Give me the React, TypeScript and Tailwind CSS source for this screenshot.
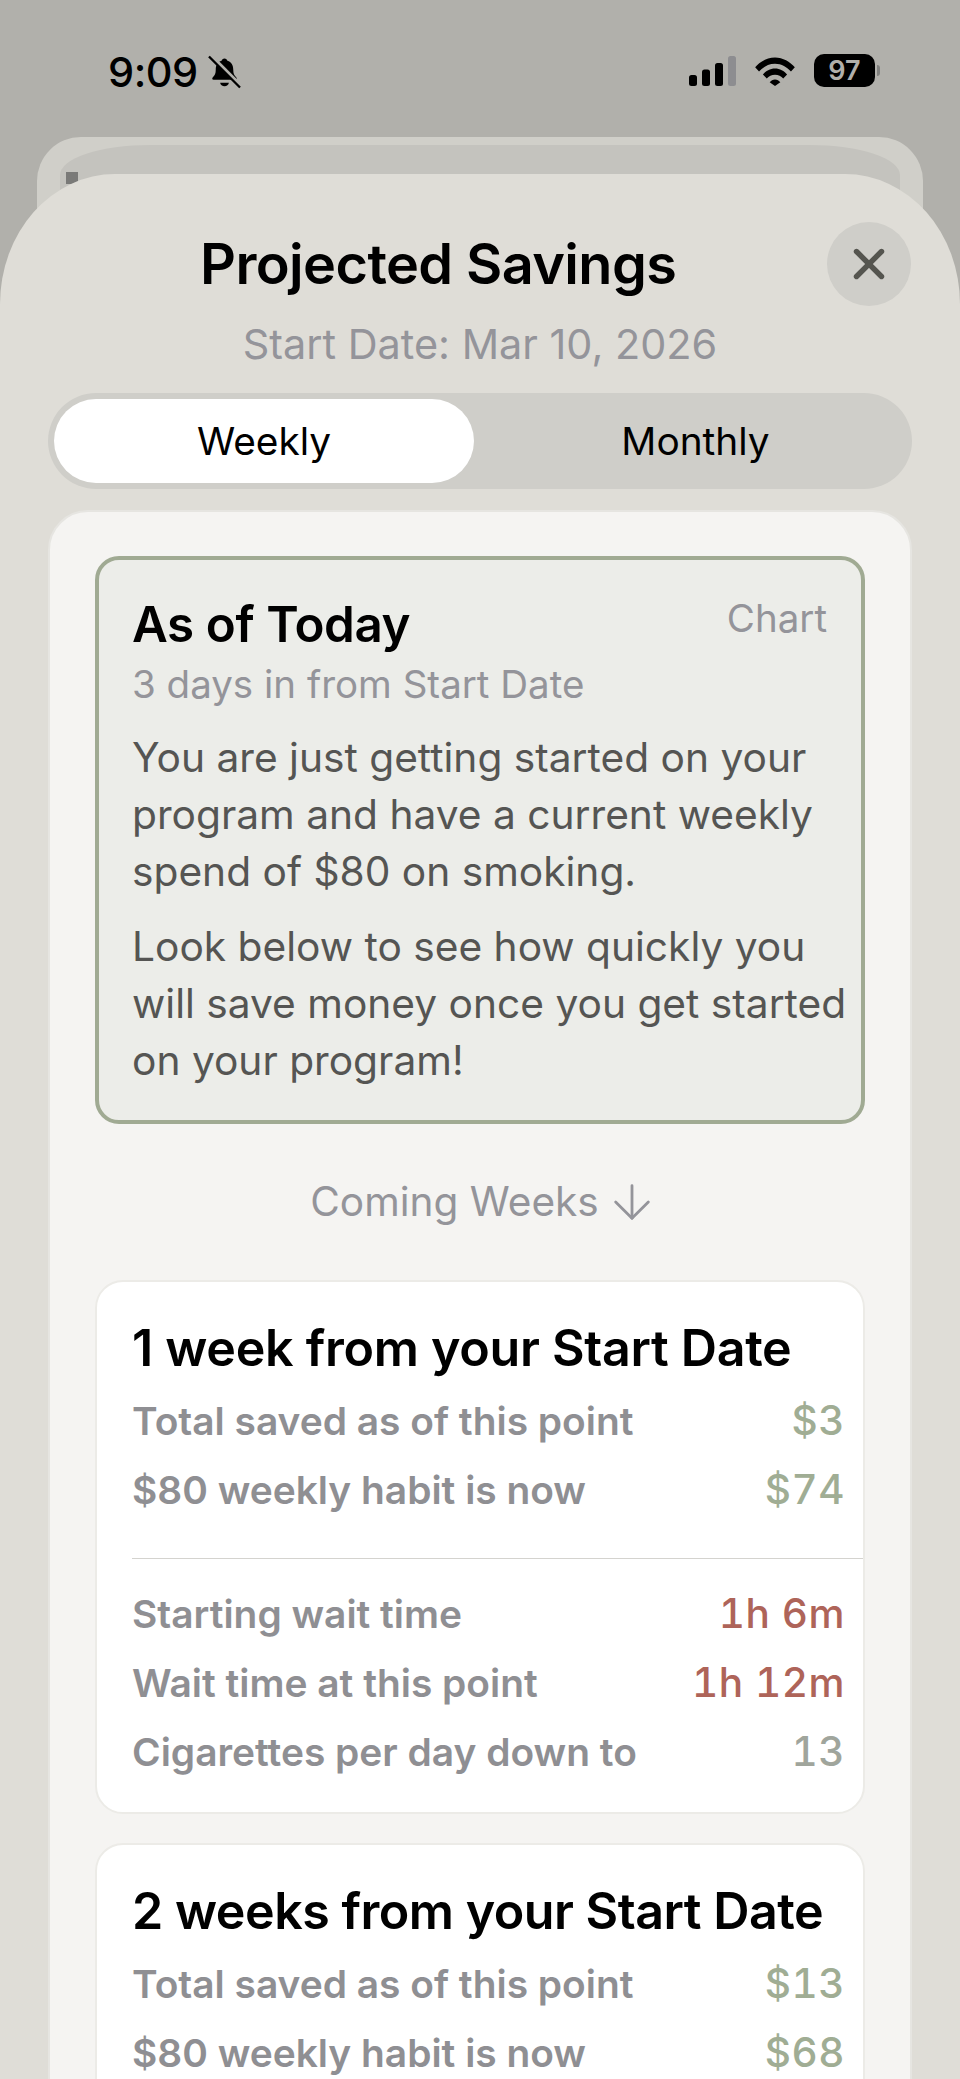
import React from 'react';
import { X, ArrowDown } from 'lucide-react';

type Row = { label: string; value: string; color: string };

const BellSlash = () => (
  <svg width="33" height="34" viewBox="0 0 34 34" className="ml-[10px]">
    <path
      d="M17 3c1.600 0 2.700 1 3 2.500 4.200 1.200 6 4.600 6 9 0 4.200 1 6 3 7.800.9.8 1 2.700-.8 2.700H5.800c-1.800 0-1.700-1.900-.8-2.700 2-1.800 3-3.600 3-7.800 0-4.400 1.800-7.800 6-9 .3-1.500 1.400-2.500 3-2.500z"
      fill="#000"
    />
    <path d="M12.500 28h9c-.3 2.300-2.200 3.600-4.500 3.600s-4.200-1.300-4.500-3.600z" fill="#000" />
    <path d="M3.500 0.500 34 31" stroke="#b1b0ab" strokeWidth="3.500" />
    <path d="M1 1 33 33" stroke="#000" strokeWidth="2.400" />
  </svg>
);

const Signal = () => (
  <svg width="47" height="30" viewBox="0 0 47 30">
    <rect x="0" y="19" width="8" height="11" rx="2.500" fill="#000" />
    <rect x="13" y="13.500" width="8" height="16.500" rx="2.500" fill="#000" />
    <rect x="26" y="7" width="8" height="23" rx="2.500" fill="#000" />
    <rect x="39" y="0" width="8" height="30" rx="2.500" fill="#8d8d90" />
  </svg>
);

const Wifi = () => (
  <svg width="42" height="30" viewBox="0 0 42 31">
    <path d="M0.500 11.500C5.500 6 12.800 1.500 21 1.500S36.500 6 41.500 11.500L37.500 16C33.500 11.500 27.800 8 21 8S8.500 11.500 4.500 16z" fill="#000" />
    <path d="M8.500 19C11.500 15.800 16 13 21 13s9.500 2.800 12.500 6l-4 4.300C27.400 21 24.500 19.300 21 19.300s-6.400 1.700-8.500 4z" fill="#000" />
    <path d="M15.500 27c1.300-1.600 3.300-2.800 5.500-2.800s4.200 1.200 5.500 2.800L21 31z" fill="#000" />
  </svg>
);

const Battery = () => (
  <div className="flex items-center">
    <div className="flex h-[33px] w-[61px] items-center justify-center rounded-[10px] bg-black text-[27px] font-semibold leading-none text-[#b1b0ab]">
      97
    </div>
    <div className="ml-[2px] h-[11px] w-[3px] rounded-r-full bg-[#7f7f7d]" />
  </div>
);

const StatRow = ({ label, value, color }: Row) => (
  <div className="flex h-[69px] items-center justify-between pr-[18px] text-[38.900px] font-semibold text-[#8f8f93]">
    <span>{label}</span>
    <span className={`text-[40.500px] font-medium tracking-[0.5px] tabular-nums ${color}`}>{value}</span>
  </div>
);

const green = 'text-[#a0ad94]';
const red = 'text-[#ae6459]';
const gray = 'text-[#a0a59c]';

const App: React.FC = () => {
  return (
    <div className="h-[2079px] overflow-hidden bg-[#b1b0ab] font-['Inter','Liberation_Sans',sans-serif] text-black">
      {/* status bar */}
      <div className="flex h-[137px] items-start justify-between pl-[108px] pr-[80px] pt-[54px]">
        <div className="flex items-center">
          <span className="text-[41.500px] font-medium leading-[36px] tracking-[-0.5px]">9:09</span>
          <BellSlash />
        </div>
        <div className="flex items-center gap-[18px]">
          <Signal />
          <Wifi />
          <Battery />
        </div>
      </div>

      {/* sheets behind */}
      <div className="mx-[37px] -mb-[100px] h-[100px] overflow-hidden rounded-t-[44px] bg-[#d0cfc9] px-[23px] pt-[8px]">
        <div className="h-[100px] overflow-hidden rounded-tl-[90px_30px] rounded-tr-[90px_30px] bg-[#c4c3be] pl-[6px] pt-[27px]">
          <div className="h-[12px] w-[12px] bg-[#7a7a78]" />
        </div>
      </div>

      {/* main sheet */}
      <div className="relative mt-[37px] h-[1905px] rounded-tl-[115px_130px] rounded-tr-[115px_130px] bg-[#dfddd7] px-[48px]">
        <div className="flex items-center justify-between pl-[152px] pr-[1px] pt-[48px]">
          <h1 className="text-[55.800px] font-semibold leading-[84px] tracking-[-0.6px]">Projected Savings</h1>
          <button className="flex h-[84px] w-[84px] items-center justify-center rounded-full bg-[#cfcec9] text-[#55554f]">
            <X size={50} strokeWidth={2.600} />
          </button>
        </div>
        <div className="mt-[11px] text-center text-[41.400px] leading-[54px] text-[#94949a]">Start Date: Mar 10, 2026</div>

        {/* weekly / monthly toggle */}
        <div className="mt-[22px] flex h-[96px] rounded-[48px] bg-[#cfcec9] p-[6px] text-[38.800px] font-normal">
          <div className="flex h-[84px] w-[420px] items-center justify-center rounded-[42px] bg-white">Weekly</div>
          <div className="flex flex-1 items-center justify-center pl-[11px]">Monthly</div>
        </div>

        <div className="mt-[21px] h-[1600px] rounded-t-[40px] border-2 border-[#e6e5e1] bg-[#f5f4f2] px-[45px] pt-[44px]">
          {/* as of today */}
          <div className="h-[568px] rounded-[24px] border-[4px] border-[#a0aa93] bg-[#ecede9] pl-[33px] pr-[6px] pt-[31px]">
            <div className="flex items-start justify-between pr-[28px]">
              <h2 className="text-[49.300px] font-semibold leading-[66px] tracking-[-0.4px]">As of Today</h2>
              <span className="pt-[2px] text-[38.500px] leading-[50px] text-[#94949a]">Chart</span>
            </div>
            <div className="text-[38.500px] leading-[54px] text-[#94949a]">3 days in from Start Date</div>
            <div className="mt-[18px] text-[40.700px] leading-[57px] text-[#555553]">
              <p>You are just getting started on your program and have a current weekly spend of $80 on smoking.</p>
              <p className="mt-[18px]">Look below to see how quickly you will save money once you get started on your program!</p>
            </div>
          </div>

          <div className="mt-[49px] flex h-[58px] items-center justify-center text-[40.600px] text-[#94949a]">
            Coming Weeks
            <ArrowDown size={56} strokeWidth={1.200} className="ml-[5px] -mr-[10px]" />
          </div>

          {/* first week */}
          <div className="mt-[49px] h-[534px] rounded-[28px] border-2 border-[#ecebe7] bg-white pl-[35px] pt-[32px]">
            <h3 className="text-[50.200px] font-semibold leading-[68px] tracking-[-0.3px]">1 week from your Start Date</h3>
            <div className="mt-[5px]">
              <StatRow label="Total saved as of this point" value="$3" color={green} />
              <StatRow label="$80 weekly habit is now" value="$74" color={green} />
            </div>
            <div className="mt-[33px] border-t border-[#d4d3cf]" />
            <div className="mt-[21px]">
              <StatRow label="Starting wait time" value="1h 6m" color={red} />
              <StatRow label="Wait time at this point" value="1h 12m" color={red} />
              <StatRow label="Cigarettes per day down to" value="13" color={gray} />
            </div>
          </div>

          {/* second week */}
          <div className="mt-[29px] h-[400px] rounded-[28px] border-2 border-[#ecebe7] bg-white pl-[35px] pt-[32px]">
            <h3 className="text-[50.200px] font-semibold leading-[68px] tracking-[-0.5px]">2 weeks from your Start Date</h3>
            <div className="mt-[5px]">
              <StatRow label="Total saved as of this point" value="$13" color={green} />
              <StatRow label="$80 weekly habit is now" value="$68" color={green} />
            </div>
          </div>
        </div>
      </div>
    </div>
  );
};

export default App;
